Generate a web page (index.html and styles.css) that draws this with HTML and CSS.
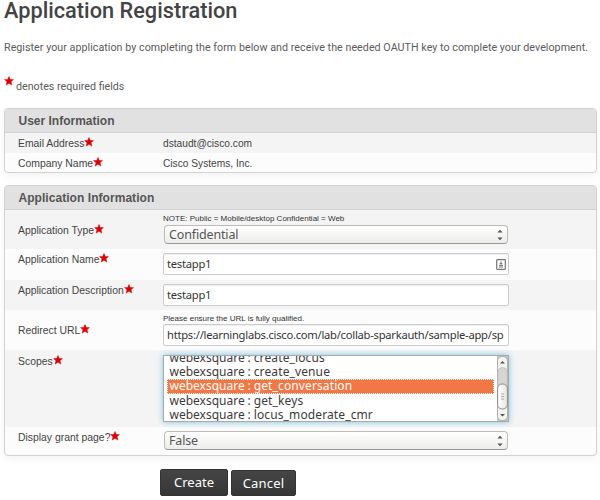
FILE: index.html
```html
<!DOCTYPE html>
<html lang="en">
<head>
<meta charset="utf-8">
<title>Application Registration</title>
<link rel="stylesheet" href="styles.css">
</head>
<body>
<svg width="0" height="0" class="defs"><symbol id="star" viewBox="0 0 10 10"><path d="M5 .5 6.300 3.600H9.400L7 5.800 7.900 9.100 5 7.300 2.100 9.100 3 5.800.6 3.600H3.700Z" fill="#e00000" stroke="#e00000" stroke-width=".5"/></symbol>
<symbol id="arrows" viewBox="0 0 6 12"><path d="M.4 3.5 3 .8 5.6 3.5ZM.4 8.5H5.6L3 11.2Z" fill="#555"/></symbol></svg>
<h1><span>Application Registration</span></h1>
<p class="intro"><span>Register your application by completing the form below and receive the needed OAUTH key to complete your development.</span></p>
<p class="required"><svg class="star"><use href="#star"/></svg><span>denotes required fields</span></p>

<section class="panel user">
  <h2><span>User Information</span></h2>
  <div class="row person"><div class="label"><span>Email Address</span><svg class="star"><use href="#star"/></svg></div><div class="value"><span>dstaudt@cisco.com</span></div></div>
  <div class="row person"><div class="label"><span>Company Name</span><svg class="star"><use href="#star"/></svg></div><div class="value"><span>Cisco Systems, Inc.</span></div></div>
</section>

<section class="panel app">
  <h2><span class="t-app">Application Information</span></h2>
  <div class="row type"><div class="label"><span>Application Type</span><svg class="star"><use href="#star"/></svg></div>
    <div class="field"><div class="note"><span>NOTE: Public = Mobile/desktop Confidential = Web</span></div><div class="select"><span>Confidential</span><svg class="arrows"><use href="#arrows"/></svg></div></div></div>
  <div class="row name"><div class="label"><span>Application Name</span><svg class="star"><use href="#star"/></svg></div>
    <div class="field"><div class="input"><span>testapp1</span><svg class="key" viewBox="0 0 10 11"><rect x=".7" y=".7" width="8.6" height="9.6" rx=".8" fill="#fff" stroke="#777" stroke-width="1.2"/><path d="M5 2.4v3.2M3.7 4.6h2.6M3 6.4h4M3 8h4" stroke="#777" stroke-width="1"/></svg></div></div></div>
  <div class="row desc"><div class="label"><span>Application Description</span><svg class="star"><use href="#star"/></svg></div>
    <div class="field"><div class="input"><span>testapp1</span></div></div></div>
  <div class="row url"><div class="label"><span>Redirect URL</span><svg class="star"><use href="#star"/></svg></div>
    <div class="field"><div class="note"><span>Please ensure the URL is fully qualified.</span></div><div class="input"><span>https://learninglabs.cisco.com/lab/collab-sparkauth/sample-app/sp</span></div></div></div>
  <div class="row scopes"><div class="label"><span>Scopes</span><svg class="star"><use href="#star"/></svg></div>
    <div class="field"><div class="list">
      <ul><li><span>webexsquare</span><i>:</i><span>create_locus</span></li><li><span>webexsquare</span><i>:</i><span>create_venue</span></li><li class="sel"><span>webexsquare</span><i>:</i><span>get_conversation</span></li><li><span>webexsquare</span><i>:</i><span>get_keys</span></li><li><span>webexsquare</span><i>:</i><span>locus_moderate_cmr</span></li></ul>
      <svg class="bar" viewBox="0 0 11 65"><defs><linearGradient id="g"><stop stop-color="#fff"/><stop offset="1" stop-color="#e4e4e2"/></linearGradient></defs><rect width="11" height="65" fill="#c4c2be"/><rect x=".5" y=".5" width="10" height="64" rx="4.5" fill="#f3f3f2" stroke="#b3b0ac"/><path d="M.8 15.500Q1.500 11.500 5.500 11.500T10.200 15.500V32H.8Z" fill="#d7d6d3" stroke="#b8b6b2" stroke-width=".7"/><rect x=".6" y="28" width="9.800" height="25" rx="4.500" fill="url(#g)" stroke="#8e8b87"/><path d="M4 38h3M4 40.500h3M4 43h3" stroke="#999" stroke-width=".8"/><path d="M3 7.500 5.500 5 8 7.500ZM3 58H8L5.500 60.500Z" fill="#555"/></svg>
    </div></div></div>
  <div class="row grant"><div class="label"><span>Display grant page?</span><svg class="star"><use href="#star"/></svg></div>
    <div class="field"><div class="select"><span>False</span><svg class="arrows"><use href="#arrows"/></svg></div></div></div>
</section>
<div class="actions"><button class="create"><span>Create</span></button><button class="cancel"><span>Cancel</span></button></div>
</body>
</html>
```
FILE: styles.css
```css
* { box-sizing: border-box; }
body { margin: 0; width: 600px; height: 500px; overflow: hidden; background: #fff; color: #444; font-family: "Liberation Sans", sans-serif; font-size: 10.4px; padding-left: 4px; }
span { white-space: nowrap; }
.defs { position: absolute; }
h1 { margin: 0; height: 26px; font: 500 21.750px/22px Roboto, sans-serif; color: #444; }
.intro { margin: 14px 0 0; height: 14px; font: 10.700px/16px Roboto, sans-serif; letter-spacing: .04px; color: #5b5b5b; }
.required { margin: 22px 0 0; height: 20px; display: flex; align-items: flex-start; gap: 2px; color: #5b5b5b; font: 10.700px/21px Roboto, sans-serif; }
.star { width: 10px; height: 10px; flex: none; }
.panel { width: 593px; border: 1px solid #d2d2d2; border-radius: 4px; box-shadow: 0 3px 8px rgba(0,0,0,.05); overflow: hidden; background: #fcfcfc; }
.user { margin-top: 12px; height: 65px; }
.app { margin-top: 12px; height: 271px; }
h2 { margin: 0; height: 24px; padding-left: 13.500px; background: #e1e1e1; border-bottom: 1px solid #d3d3d3; font: bold 12px/24px "Liberation Sans", sans-serif; color: #555; }
.t-app { letter-spacing: .05px; }
.row { display: grid; grid-template-columns: 145px 346px; padding-left: 13px; }
.row:nth-child(even) { background: #f4f4f4; }
.label { display: flex; line-height: 14px; height: 12px; }
.person { height: 20px; padding-top: 4px; }
.value { line-height: 14px; font-size: 10.200px; }
.type { height: 39px; }
.type .label { margin-top: 14px; }
.name { height: 31px; padding-top: 4px; }
.desc { height: 30px; padding-top: 4px; }
.url { height: 40px; }
.url .label { margin-top: 14px; }
.scopes { height: 77px; padding-top: 5px; }
.grant { height: 28px; padding-top: 4px; }
.note { height: 15px; font-size: 8px; line-height: 17px; color: #333; }
.url .note { height: 14px; }
.select { margin: 0 1px; height: 19px; border: 1px solid #bdbbb7; border-bottom-color: #9b9994; border-radius: 4px; background: linear-gradient(#fff, #ededeb); padding: 0 4px; display: flex; justify-content: space-between; align-items: center; font: 12.500px/17px "Noto Sans", sans-serif; letter-spacing: -.15px; color: #555; }
.arrows { width: 6px; height: 12px; }
.input { height: 22px; border: 1px solid #ccc; border-radius: 2px; box-shadow: inset 0 1px 1px rgba(0,0,0,.07); background: #fff; padding: 0 2px 0 3px; display: flex; justify-content: space-between; align-items: center; font: 11.200px/20px "Noto Sans", sans-serif; letter-spacing: -.25px; color: #333; }
.key { width: 10px; height: 11px; }
.list { height: 67px; border: 1px solid #aaa; box-shadow: 0 0 6px #75c5e8; background: #fff; display: flex; justify-content: space-between; overflow: hidden; }
ul { list-style: none; margin: -5.500px 0 0 3px; padding: 0; width: 327px; font: 12px/14.400px "Noto Sans", sans-serif; color: #3c3c3c; }
li { height: 14.400px; padding-left: 2.500px; display: flex; }
li i { width: 9px; text-align: center; font-style: normal; }
li i + span { letter-spacing: .12px; }
.sel { background: #f17845; color: #fff; outline: 1px dotted #fff; outline-offset: -1px; }
.bar { width: 11px; height: 65px; }
.actions { margin: 13px 0 0 156px; display: flex; gap: 3px; align-items: flex-start; }
button { border: 1px solid #333; border-radius: 2px; background: linear-gradient(#454545, #363636); color: #fff; padding: 0; height: 27px; font: 13px/23px "Noto Sans", sans-serif; }
.create { width: 68px; }
.cancel { width: 65px; height: 26px; margin-top: 1px; letter-spacing: .2px; }
```
